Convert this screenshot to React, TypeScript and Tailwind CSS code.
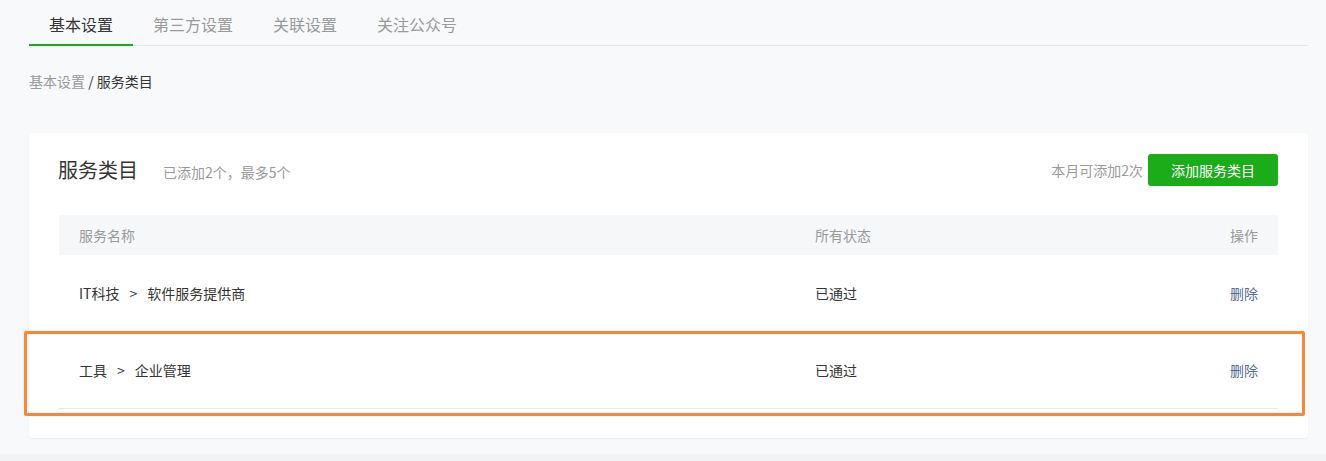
import { useState } from 'react'

const tabs = ['基本设置', '第三方设置', '关联设置', '关注公众号']

const rows = [
  { cat: 'IT科技', sub: '软件服务提供商', status: '已通过' },
  { cat: '工具', sub: '企业管理', status: '已通过' },
]

export default function App() {
  const [active, setActive] = useState(0)
  return (
    <div className="min-h-[461px] bg-[#f8f9fa] font-['Noto_Sans_CJK_SC','Noto_Sans',sans-serif] text-[#353535]">
      <div className="pl-[29px] pr-[18px]">
        <div className="flex border-b border-[#e7e7eb]">
          {tabs.map((t, i) => (
            <button
              key={t}
              onClick={() => setActive(i)}
              className={
                i === active
                  ? 'h-[46px] -mb-px px-5 pt-1 border-b-2 border-[#1aad19] text-[16px] leading-[20px] text-[#353535]'
                  : 'h-[46px] -mb-px px-5 pt-1 border-b-2 border-transparent text-[16px] leading-[20px] text-[#9a9a9a]'
              }
            >
              {t}
            </button>
          ))}
        </div>

        <div className="mt-[25px] text-[14px] leading-[20px]">
          <span className="text-[#9a9a9a]">基本设置</span>
          <span className="text-[#353535]"> / 服务类目</span>
        </div>

        <div className="mt-[42px] rounded-[4px] bg-white px-[30px] pt-[21px] pb-[29px] shadow-[0_1px_2px_rgba(0,0,0,0.06)]">
          <div className="flex h-[32px] items-center">
            <div className="-ml-px text-[20px] leading-[28px] text-[#353535]">服务类目</div>
            <div className="ml-[25px] mt-[3px] text-[14px] leading-[20px] text-[#9a9a9a]">已添加2个，最多5个</div>
            <div className="ml-auto mr-[5px] text-[14px] leading-[20px] text-[#9a9a9a]">本月可添加2次</div>
            <button className="h-[32px] w-[130px] rounded-[3px] bg-[#1aad19] text-[14px] text-white">添加服务类目</button>
          </div>

          <div className="mt-[29px]">
            <div className="grid h-[40px] grid-cols-[736px_1fr_auto] items-center bg-[#f6f7f9] px-5 text-[14px] text-[#9a9a9a]">
              <div>服务名称</div>
              <div>所有状态</div>
              <div className="text-right">操作</div>
            </div>
            {rows.map((r, i) => (
              <div
                key={r.cat}
                className="relative grid h-[77px] grid-cols-[736px_1fr_auto] items-center border-b border-[#e7e7eb] px-5 text-[14px]"
              >
                <div>
                  {r.cat}
                  <span className="px-[10px]">&gt;</span>
                  {r.sub}
                </div>
                <div>{r.status}</div>
                <a className="text-right text-[#576b95]" href="#">删除</a>
                {i === 1 && (
                  <div className="pointer-events-none absolute -left-[35px] -right-[27px] -top-px -bottom-[8px] rounded-[2px] border-[3px] border-[#fd8534]" />
                )}
              </div>
            ))}
          </div>
        </div>
      </div>
      <div className="mt-[16px] h-[7px] bg-[#f2f3f5]" />
    </div>
  )
}
